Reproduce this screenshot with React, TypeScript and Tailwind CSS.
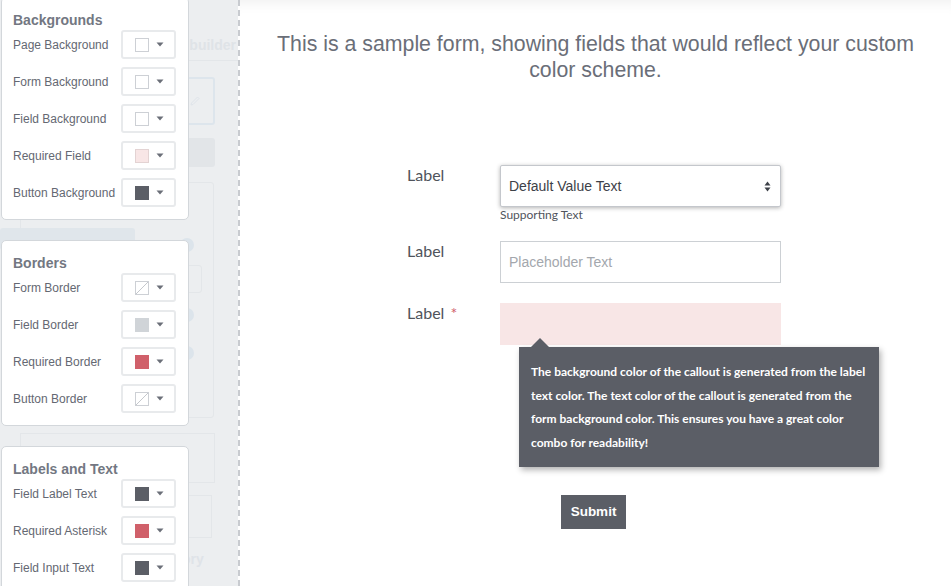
import React from 'react';

type Swatch = 'white' | 'pink' | 'dark' | 'red' | 'gray' | 'none';

interface ColorRow {
  label: string;
  swatch: Swatch;
}

const groups: { title: string; rows: ColorRow[] }[] = [
  {
    title: 'Backgrounds',
    rows: [
      { label: 'Page Background', swatch: 'white' },
      { label: 'Form Background', swatch: 'white' },
      { label: 'Field Background', swatch: 'white' },
      { label: 'Required Field', swatch: 'pink' },
      { label: 'Button Background', swatch: 'dark' },
    ],
  },
  {
    title: 'Borders',
    rows: [
      { label: 'Form Border', swatch: 'none' },
      { label: 'Field Border', swatch: 'gray' },
      { label: 'Required Border', swatch: 'red' },
      { label: 'Button Border', swatch: 'none' },
    ],
  },
  {
    title: 'Labels and Text',
    rows: [
      { label: 'Field Label Text', swatch: 'dark' },
      { label: 'Required Asterisk', swatch: 'red' },
      { label: 'Field Input Text', swatch: 'dark' },
    ],
  },
];

const swatchClass: Record<Swatch, string> = {
  white: 'bg-white border border-[#cdd0d5]',
  pink: 'bg-[#f8e6e6] border border-[#e3d3d3]',
  dark: 'bg-[#5b5e66]',
  red: 'bg-[#d0606a]',
  gray: 'bg-[#d0d4d8]',
  none: 'bg-white border border-[#cdd0d5]',
};

const SwatchButton: React.FC<{ swatch: Swatch }> = ({ swatch }) => (
  <div className="flex h-[29px] w-[55px] items-center gap-[7px] rounded-[3px] border-2 border-[#e8eaec] bg-white pl-3">
    <div className={`relative h-[14px] w-[14px] overflow-hidden ${swatchClass[swatch]}`}>
      {swatch === 'none' && (
        <svg className="absolute inset-0" width="12" height="12" viewBox="0 0 12 12">
          <line x1="0" y1="12" x2="12" y2="0" stroke="#c5c8cd" strokeWidth="1" />
        </svg>
      )}
    </div>
    <svg width="8" height="5" viewBox="0 0 8 5">
      <path d="M0.5 0.5 L7.5 0.5 L4 4.5 Z" fill="#6b6f78" />
    </svg>
  </div>
);

const ColorCard: React.FC<{ title: string; rows: ColorRow[] }> = ({ title, rows }) => (
  <div className="ml-px w-[188px] rounded-[5px] border border-[#d3d7db] bg-white pb-3 pl-[11px] pr-3 pt-3">
    <div className="h-5 text-[14px] font-bold leading-5 text-[#737782]">{title}</div>
    <div className="flex flex-col gap-2">
      {rows.map((row) => (
        <div key={row.label} className="flex h-[29px] items-center justify-between">
          <span className="text-[12px] text-[#646872]">{row.label}</span>
          <SwatchButton swatch={row.swatch} />
        </div>
      ))}
    </div>
  </div>
);

const GhostBackdrop: React.FC = () => (
  <div className="absolute inset-0 overflow-hidden">
    <span className="absolute right-[2px] top-[35px] text-[14px] font-bold text-[#dfe3e7]">Field builder</span>
    <div className="absolute left-[150px] right-0 top-[60px] h-px bg-[#e3e6e9]" />
    <div className="absolute left-[120px] top-[77px] flex h-[48px] w-[95px] items-center justify-end rounded-[3px] border-2 border-[#dde5ec] pr-[12px]">
      <svg width="12" height="12" viewBox="0 0 12 12">
        <path d="M2 10 L2.5 8 L8.5 2 L10 3.5 L4 9.5 Z" fill="none" stroke="#dfe4ea" strokeWidth="1" />
      </svg>
    </div>
    <div className="absolute left-[120px] top-[138px] h-[29px] w-[95px] rounded-[3px] bg-[#e2e5e8]" />
    <div className="absolute left-[20px] top-[182px] h-[236px] w-[194px] rounded-[3px] border border-[#e3e6e9]" />
    <div className="absolute left-0 top-[228px] h-[22px] w-[135px] rounded-[3px] bg-[#e0e6eb]" />
    <div className="absolute left-[180px] top-[238px] h-[14px] w-[14px] rounded-full bg-[#dce4eb]" />
    <div className="absolute left-[150px] top-[265px] h-[28px] w-[52px] rounded-[3px] border border-[#e3e6e9]" />
    <div className="absolute left-[180px] top-[308px] h-[14px] w-[14px] rounded-full bg-[#dce4eb]" />
    <div className="absolute left-[180px] top-[346px] h-[14px] w-[14px] rounded-full bg-[#dce4eb]" />
    <div className="absolute left-[20px] top-[433px] h-[50px] w-[195px] border border-[#e3e6e9]" />
    <div className="absolute left-[20px] top-[495px] h-[43px] w-[192px] border border-[#e3e6e9]" />
    <span className="absolute left-[143px] top-[549px] text-[14px] font-bold text-[#dfe3e8]">Category</span>
  </div>
);

const SelectArrows: React.FC = () => (
  <svg width="7" height="11" viewBox="0 0 7 11">
    <path d="M0.5 4.5 L3.5 0.5 L6.5 4.5 Z" fill="#3d4148" />
    <path d="M0.5 6.5 L3.5 10.5 L6.5 6.5 Z" fill="#3d4148" />
  </svg>
);

const SampleForm: React.FC = () => (
  <div className="ml-[167px] mt-[82px] w-[374px]">
    <div className="flex flex-col gap-5">
      <div className="flex">
        <div className="w-[93px] text-[16px] leading-5 text-[#50545c] [font-family:Lato,sans-serif]">Label</div>
        <div className="flex-1">
          <div className="flex h-[42px] items-center justify-between rounded-[2px] border border-[#c4c7cc] bg-white pl-2 pr-[9px] shadow-[0_1px_4px_rgba(0,0,0,0.3)]">
            <span className="text-[14px] text-[#3d4148]">Default Value Text</span>
            <SelectArrows />
          </div>
          <div className="mt-px text-[12px] leading-[13px] text-[#50545c] [font-family:Lato,sans-serif]">Supporting Text</div>
        </div>
      </div>
      <div className="flex">
        <div className="w-[93px] text-[16px] leading-5 text-[#50545c] [font-family:Lato,sans-serif]">Label</div>
        <div className="flex h-[42px] flex-1 items-center border border-[#ccd0d4] bg-white pl-2">
          <span className="text-[14px] text-[#a3a7ad]">Placeholder Text</span>
        </div>
      </div>
      <div className="flex">
        <div className="w-[93px] text-[16px] leading-5 text-[#50545c] [font-family:Lato,sans-serif]">
          Label <span className="ml-0.5 text-[#d0606a]">*</span>
        </div>
        <div className="relative h-[42px] flex-1 bg-[#f8e6e6]">
          <div className="absolute left-[19px] top-[44px] z-10 w-[360px] bg-[#5b5e66] py-[13px] pl-[12px] pr-[12px] text-[12px] font-bold leading-[23.5px] text-white shadow-[2px_3px_6px_rgba(0,0,0,0.3)] [font-family:Lato,sans-serif]">
            <svg className="absolute left-[11px] top-[-9px]" width="20" height="10" viewBox="0 0 20 10">
              <path d="M0 10 L10 0 L20 10 Z" fill="#5b5e66" />
            </svg>
            The background color of the callout is generated from the label text color. The text color of the callout is
            generated from the form background color. This ensures you have a great color combo for readability!
          </div>
        </div>
      </div>
    </div>
    <div className="mt-[150px] flex justify-center pr-px">
      <button className="h-[34px] w-[65px] bg-[#5b5e66] text-[13.5px] font-bold text-white">Submit</button>
    </div>
  </div>
);

export default function App() {
  return (
    <div className="flex h-[586px] w-[951px] overflow-hidden bg-white [font-family:'Liberation_Sans',Arial,sans-serif]">
      <aside className="relative w-[238px] shrink-0 bg-[#eceef0]">
        <GhostBackdrop />
        <div className="relative -mt-[3px] flex flex-col gap-5">
          {groups.map((g) => (
            <ColorCard key={g.title} title={g.title} rows={g.rows} />
          ))}
        </div>
      </aside>
      <main className="flex-1 border-l-2 border-dashed border-[#c8cbd0] shadow-[inset_0_14px_14px_-12px_rgba(0,0,0,0.07)]">
        <h1 className="mx-auto mt-[31px] w-[660px] text-center text-[21.3px] leading-[26px] text-[#6a6e78]">
          This is a sample form, showing fields that would reflect your custom color scheme.
        </h1>
        <SampleForm />
      </main>
    </div>
  );
}
